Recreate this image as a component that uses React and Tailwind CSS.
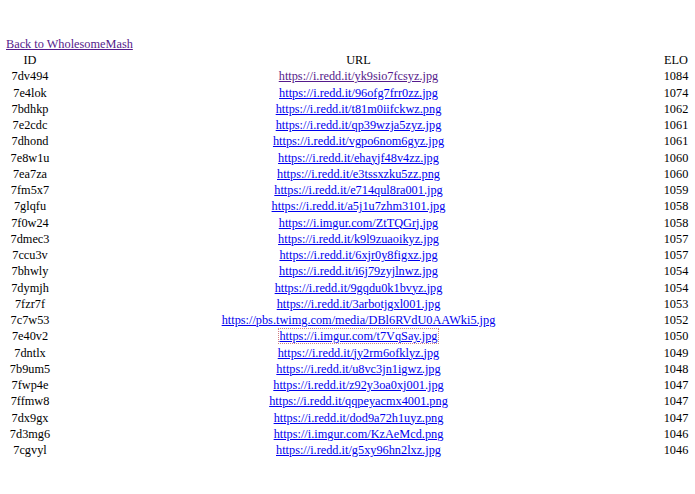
import React from 'react';

const rows = [
  ['7dv494', 'https://i.redd.it/yk9sio7fcsyz.jpg', 1084, true],
  ['7e4lok', 'https://i.redd.it/96ofg7frr0zz.jpg', 1074],
  ['7bdhkp', 'https://i.redd.it/t81m0iifckwz.png', 1062],
  ['7e2cdc', 'https://i.redd.it/qp39wzja5zyz.jpg', 1061],
  ['7dhond', 'https://i.redd.it/vgpo6nom6gyz.jpg', 1061],
  ['7e8w1u', 'https://i.redd.it/ehayjf48v4zz.jpg', 1060],
  ['7ea7za', 'https://i.redd.it/e3tssxzku5zz.png', 1060],
  ['7fm5x7', 'https://i.redd.it/e714qul8ra001.jpg', 1059],
  ['7glqfu', 'https://i.redd.it/a5j1u7zhm3101.jpg', 1058],
  ['7f0w24', 'https://i.imgur.com/ZtTQGrj.jpg', 1058],
  ['7dmec3', 'https://i.redd.it/k9l9zuaoikyz.jpg', 1057],
  ['7ccu3v', 'https://i.redd.it/6xjr0y8figxz.jpg', 1057],
  ['7bhwly', 'https://i.redd.it/i6j79zyjlnwz.jpg', 1054],
  ['7dymjh', 'https://i.redd.it/9gqdu0k1bvyz.jpg', 1054],
  ['7fzr7f', 'https://i.redd.it/3arbotjgxl001.jpg', 1053],
  ['7c7w53', 'https://pbs.twimg.com/media/DBl6RVdU0AAWki5.jpg', 1052],
  ['7e40v2', 'https://i.imgur.com/t7VqSay.jpg', 1050, false, true],
  ['7dntlx', 'https://i.redd.it/jy2rm6ofklyz.jpg', 1049],
  ['7b9um5', 'https://i.redd.it/u8vc3jn1igwz.jpg', 1048],
  ['7fwp4e', 'https://i.redd.it/z92y3oa0xj001.jpg', 1047],
  ['7ffmw8', 'https://i.redd.it/qqpeyacmx4001.png', 1047],
  ['7dx9gx', 'https://i.redd.it/dod9a72h1uyz.png', 1047],
  ['7d3mg6', 'https://i.imgur.com/KzAeMcd.png', 1046],
  ['7cgvyl', 'https://i.redd.it/g5xy96hn2lxz.jpg', 1046],
];

const App = () => {
  return (
    <div className="min-h-screen bg-white px-[6px] pt-[37px] font-['Liberation_Serif',serif] text-[12.3px] text-black">
      <a href="#" className="block leading-[15px] text-[#551a8b] underline">
        Back to WholesomeMash
      </a>
      <table className="w-full">
        <thead>
          <tr>
            <th className="w-[48px] p-0 text-center font-normal leading-[16.25px]">ID</th>
            <th className="p-0 text-center font-normal leading-[16.25px]">URL</th>
            <th className="w-[26px] p-0 text-center font-normal leading-[16.25px]">ELO</th>
          </tr>
        </thead>
        <tbody>
          {rows.map(([id, url, elo, visited, focused]) => (
            <tr key={id}>
              <td className="p-0 text-center leading-[16.25px]">{id}</td>
              <td className="p-0 text-center leading-[16.25px]">
                <a
                  href="#"
                  className={`underline ${visited ? 'text-[#551a8b]' : 'text-[#0000ee]'} ${focused ? 'outline outline-1 outline-dotted outline-[#d08080]' : ''}`}
                >
                  {url}
                </a>
              </td>
              <td className="p-0 text-center leading-[16.25px]">{elo}</td>
            </tr>
          ))}
        </tbody>
      </table>
    </div>
  );
};

export default App;
